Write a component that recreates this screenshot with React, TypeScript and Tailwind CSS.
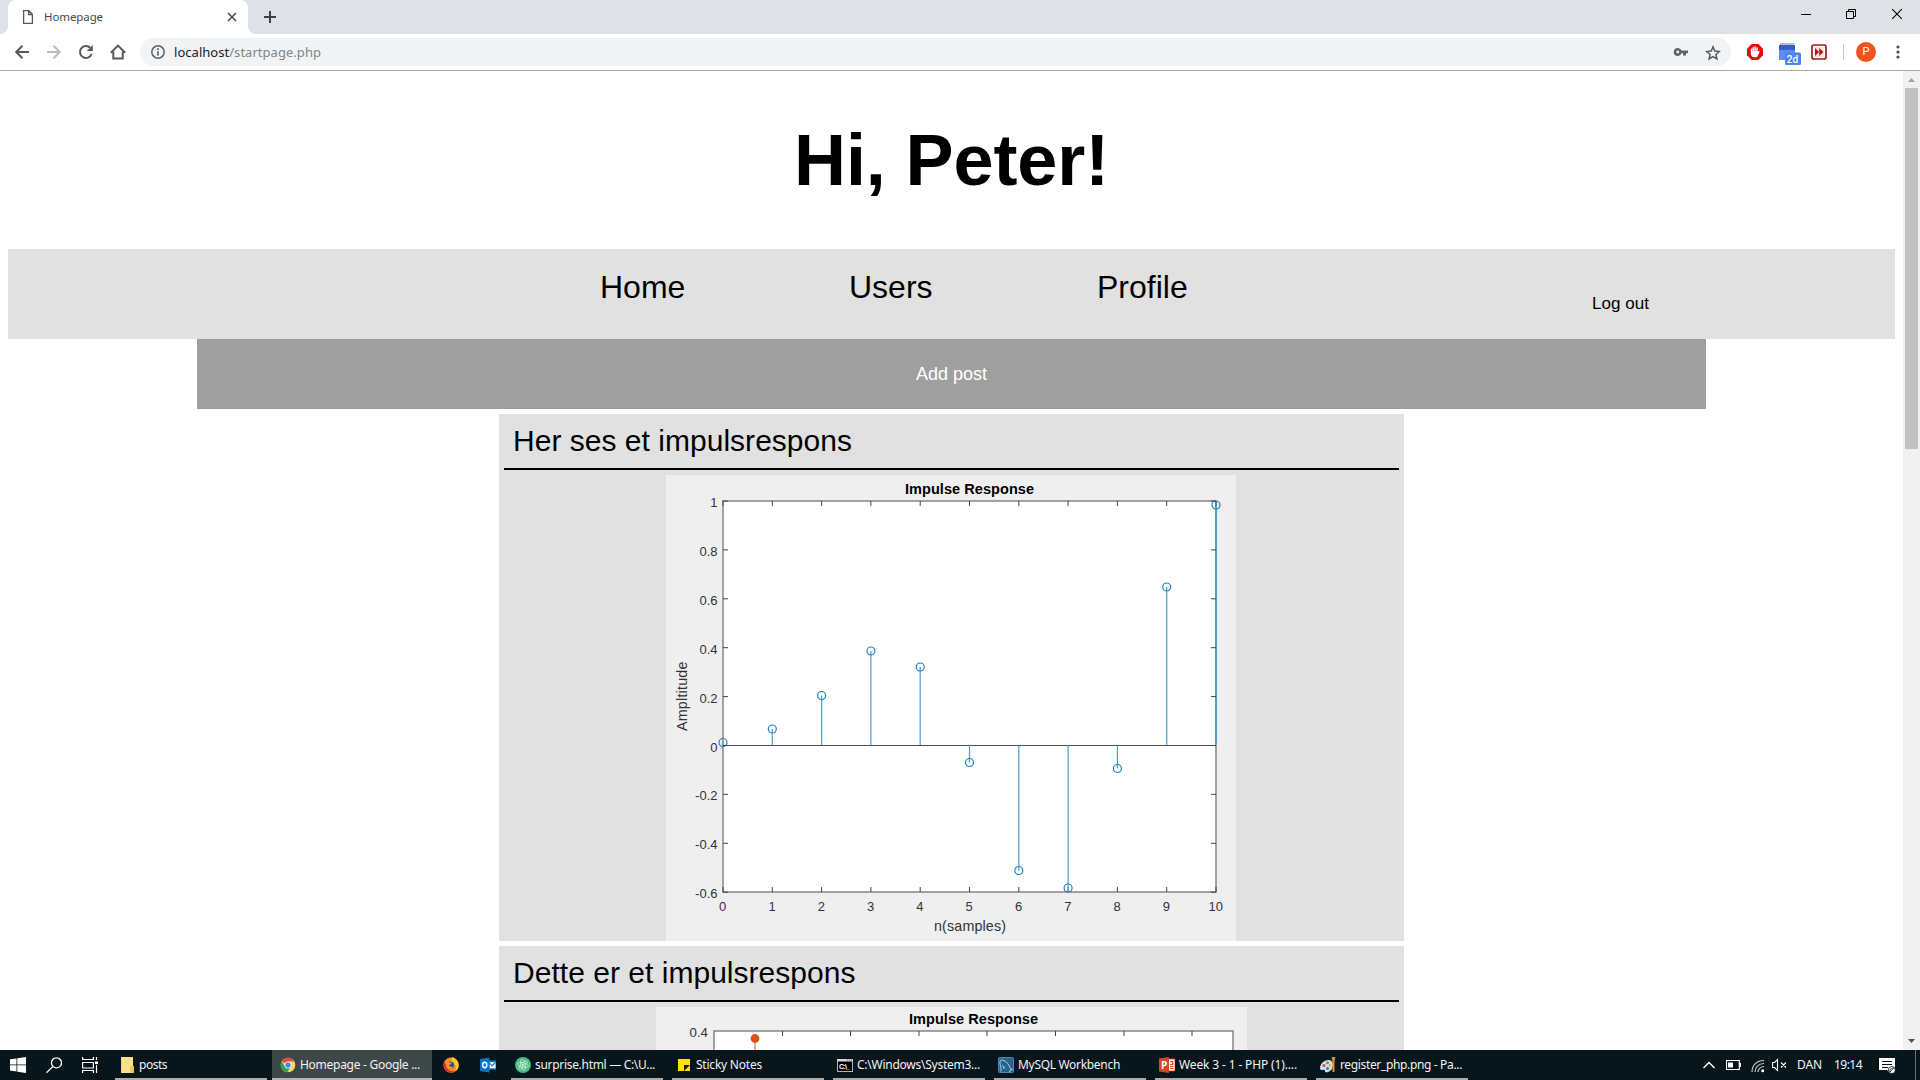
import { useLayoutEffect, useRef } from 'react';
import type { ReactNode } from 'react';

/** Inline label whose tracking is adjusted so that it fills the given width. */
function Fit({ w, children, className = '' }: { w: number; children: ReactNode; className?: string }) {
  const ref = useRef<HTMLSpanElement>(null);
  useLayoutEffect(() => {
    const el = ref.current;
    if (!el) return;
    el.style.letterSpacing = '0px';
    const n = (el.textContent || '').length;
    el.style.letterSpacing = `${(w - el.getBoundingClientRect().width) / n}px`;
  }, [w]);
  return <span ref={ref} className={`inline-block whitespace-pre ${className}`}>{children}</span>;
}

function TabStrip() {
  return (
    <div className="flex h-[34px] bg-[#dee1e6]">
      <div className="w-2 bg-white"><div className="h-full rounded-br-lg bg-[#dee1e6]" /></div>
      <div className="flex w-[240px] items-center rounded-t-lg bg-white pl-[14px] pr-[10px] text-[11.5px] text-[#45494d]">
        <svg width="12" height="16" viewBox="0 0 12 16" fill="none" stroke="#55595e" strokeWidth="1.3">
          <path d="M1.6 1.7h5.2l3.6 3.6v9H1.6zM6.6 1.7v3.8h3.8" />
        </svg>
        <Fit w={59} className="ml-[10px]">Homepage</Fit>
        <svg className="ml-auto" width="12" height="12" viewBox="0 0 12 12" stroke="#4b4f54" strokeWidth="1.7"><path d="M2 2l8 8M10 2l-8 8" /></svg>
      </div>
      <div className="w-2 bg-white"><div className="h-full rounded-bl-lg bg-[#dee1e6]" /></div>
      <div className="flex w-7 items-center justify-center">
        <svg width="14" height="14" viewBox="0 0 14 14" stroke="#3c4043" strokeWidth="2"><path d="M7 1v12M1 7h12" /></svg>
      </div>
      <div className="ml-auto flex pr-[5px] pt-[6px]">
        <svg width="46" height="16" viewBox="0 0 46 16" stroke="#000" fill="none"><path d="M21 8.5h10" /></svg>
        <svg width="46" height="16" viewBox="0 0 46 16" stroke="#000" fill="none"><path d="M20.500 5.500h7v7h-7zM22.500 5.500v-2h7v7h-2" /></svg>
        <svg width="43" height="16" viewBox="0 0 43 16" stroke="#000" fill="none" strokeWidth="1.1"><path d="M20.200 3.200l9.600 9.600M29.800 3.200l-9.600 9.600" /></svg>
      </div>
    </div>
  );
}

function Toolbar() {
  return (
    <div className="flex h-[37px] items-center border-b border-[#a9a9a9] bg-white">
      <div className="flex w-[140px] items-center gap-4 pl-[14px]">
        <svg width="16" height="16" viewBox="0 0 16 16" fill="none" stroke="#55595e" strokeWidth="2"><path d="M15 8H2.500M8.500 1.700L2.200 8l6.300 6.300" /></svg>
        <svg width="16" height="16" viewBox="0 0 16 16" fill="none" stroke="#b9bbbe" strokeWidth="2"><path d="M1 8h12.500M7.500 1.700L13.800 8l-6.300 6.300" /></svg>
        <svg width="16" height="16" viewBox="0 0 16 16" fill="none" stroke="#55595e" strokeWidth="2"><path d="M13.600 10A6 6 0 1 1 12.300 3.800" /><path d="M14.800 1v6h-6z" fill="#55595e" stroke="none" /></svg>
        <svg width="16" height="16" viewBox="0 0 16 16" fill="none" stroke="#55595e" strokeWidth="2"><path d="M.800 8.800L8 1.600l7.200 7.200M3.300 7.500V14.500h9.400V7.500" /></svg>
      </div>
      <div className="flex h-7 w-[1591px] items-center rounded-full bg-[#f1f3f4] pl-[11px] pr-[10px]">
        <svg width="14" height="14" viewBox="0 0 14 14" fill="none" stroke="#5f6368" strokeWidth="1.500"><circle cx="7" cy="7" r="6.200" /><path d="M7 6.200v4.300M7 3.300v1.700" strokeWidth="1.700" /></svg>
        <Fit w={147} className="ml-[9px] mt-px text-[13px] text-[#80868b]"><span className="text-[#202124]">localhost</span>/startpage.php</Fit>
        <svg className="ml-auto" width="16" height="10" viewBox="0 0 16 10" fill="#5f6368"><path fillRule="evenodd" d="M4.800 1a4 4 0 1 0 3.700 5.300H10V8.500h3V6.300h2V3.600H8.500A4 4 0 0 0 4.800 1zm0 2.600a1.400 1.400 0 1 1 0 2.800 1.400 1.400 0 0 1 0-2.800z" /></svg>
        <svg className="ml-[16px] mt-px" width="16" height="16" viewBox="0 0 16 16" fill="none" stroke="#55595e" strokeWidth="1.500"><path d="M8 1.900l1.800 4.200 4.500.4-3.400 3 1 4.500L8 11.600 4.100 14l1-4.500-3.400-3 4.500-.4z" /></svg>
      </div>
      <div className="ml-auto flex h-full items-center">
        <svg width="16" height="16" viewBox="0 0 16 16"><path d="M4.700 0h6.600L16 4.700v6.600L11.300 16H4.700L0 11.300V4.700z" fill="#e40d0d" /><path d="M4.500 8V5.200M6.200 8V3.700M8.100 8V3M10 8V4" stroke="#fff" strokeWidth="1.400" strokeLinecap="round" /><path d="M3.900 7h6.800v1l1-.9c.6-.4 1.200 0 .8.600L10.800 12c-.5.900-1.300 1.300-2.500 1.300H7.500c-2.300 0-3.600-1.500-3.600-3.500z" fill="#fff" /></svg>
        <svg className="ml-[16px] mt-1" width="22" height="24" viewBox="0 0 22 24">
          <path d="M0 6h16v12H0z" fill="#5b8def" /><path d="M0 3h16v5H0z" fill="#3560c8" /><path d="M1 1h14v2H1z" fill="#bdbdbd" />
          <rect x="6" y="10.500" width="16" height="12.500" rx="1.500" fill="#4a86e8" />
          <text x="13.500" y="20.600" textAnchor="middle" fill="#fff" fontSize="10" fontWeight="500" fontFamily="Roboto, sans-serif">2d</text>
        </svg>
        <svg className="ml-[10px]" width="16" height="16" viewBox="0 0 16 16"><rect x="1" y="1" width="14" height="14" rx="2" fill="#fff" stroke="#a71b18" strokeWidth="1.700" /><rect x="3" y="3" width="10" height="10" fill="#e5b5b0" opacity=".35" /><path d="M4 4l4 4-4 4zM8.200 4l4.200 4-4.200 4z" fill="#ad1613" /></svg>
        <div className="ml-[16px] h-4 w-px bg-[#c7c9cc]" />
        <div className="ml-[12px] flex size-5 items-center justify-center rounded-full bg-[#f4511e] font-[Roboto] text-[11px] text-white">P</div>
        <svg className="ml-[20px] mr-[20px]" width="4" height="14" viewBox="0 0 4 14" fill="#4c5055"><circle cx="2" cy="2" r="1.600" /><circle cx="2" cy="7" r="1.600" /><circle cx="2" cy="12" r="1.600" /></svg>
      </div>
    </div>
  );
}

const stems = [742.5, 729, 695.5, 651, 667, 762.500, 870.500, 888, 768.500, 587, 505];
const yLabels = ['1', '0.8', '0.6', '0.4', '0.2', '0', '-0.2', '-0.4', '-0.6'];

function SampleChart() {
  return (
    <svg className="ml-[162px] block bg-[#efefef]" width="570" height="466" viewBox="666 475 570 466" fontFamily="Liberation Sans, sans-serif">
      <rect x="723" y="501" width="493" height="391" fill="#fff" stroke="#858585" strokeWidth="1.500" />
      <path d="M723 745.500H1216" stroke="#4d4d4d" />
      {stems.map((y, i) => {
        const x = 723 + i * 49.3;
        return (
          <g key={i}>
            <path d={`M${x} 892v-5M${x} 501v5`} stroke="#444" strokeWidth="1" />
            <path d={`M${x} 745V${y}`} stroke="#4c9dd1" strokeWidth={i === 10 ? 2 : 1.2} />
            <circle cx={x} cy={y} r="4" fill="none" stroke="#1a80c6" strokeWidth="1.200" />
            <text x={x - 0.3} y="911" textAnchor="middle" fontSize="13" fill="#333">{i}</text>
          </g>
        );
      })}
      {yLabels.map((t, i) => {
        const y = 501 + i * 48.9;
        return (
          <g key={t}>
            <path d={`M723 ${y}h5M1216 ${y}h-5`} stroke="#444" />
            <text x="717.500" y={y + 6} textAnchor="end" fontSize="13" fill="#333">{t}</text>
          </g>
        );
      })}
      <text x="905" y="494" fontSize="14.500" fontWeight="bold" textLength="129" fill="#000">Impulse Response</text>
      <text x="934" y="931" fontSize="14.300" textLength="72" fill="#333">n(samples)</text>
      <text transform="translate(687 731) rotate(-90)" fontSize="14.300" textLength="69.500" fill="#333">Ampltitude</text>
    </svg>
  );
}

function NextChart() {
  return (
    <svg className="mx-auto block bg-[#efefef]" width="591" height="480" viewBox="656 1007 591 480" fontFamily="Liberation Sans, sans-serif">
      <rect x="714" y="1031" width="519" height="410" fill="#fff" stroke="#858585" strokeWidth="1.500" />
      <path d="M782.500 1031v5M850.500 1031v5M919 1031v5M987 1031v5M1055.500 1031v5M1124 1031v5M1192 1031v5" stroke="#444" />
      <path d="M755 1038v60" stroke="#ec9c7c" strokeWidth="1.700" />
      <circle cx="755" cy="1038.500" r="4.400" fill="#d95319" />
      <text x="708" y="1037" textAnchor="end" fontSize="13.300" fill="#333">0.4</text>
      <text x="909" y="1024" fontSize="14.500" fontWeight="bold" textLength="129" fill="#000">Impulse Response</text>
    </svg>
  );
}

function Post({ title, w, children }: { title: string; w: number; children: ReactNode }) {
  return (
    <article className="mx-auto mt-[5px] w-[905px] bg-[#e1e1e1] px-[5px] pt-[5px]">
      <h2 className="flex h-[51px] items-start border-b-2 border-black pl-[9px] pt-[5px] text-[30px] leading-[34px]"><Fit w={w}>{title}</Fit></h2>
      <div className="pt-[5px]">{children}</div>
    </article>
  );
}

function Page() {
  return (
    <div className="flex h-[979px] overflow-hidden bg-white">
      <main className="h-full w-[1903px] overflow-hidden px-2 font-['Liberation_Sans',Arial,sans-serif] text-black">
        <h1 className="h-[178px] pt-[49px] text-center text-[72px] font-bold leading-[80px]"><Fit w={315}>Hi, Peter!</Fit></h1>
        <nav className="flex h-[90px] bg-[#e1e1e1]">
          <a className="ml-[592px] mt-[20px] w-[249px] text-[32px] leading-9">Home</a>
          <a className="mt-[20px] w-[248px] text-[32px] leading-9">Users</a>
          <a className="mt-[20px] w-[495px] text-[32px] leading-9">Profile</a>
          <a className="mt-[45px] text-[17px] leading-5"><Fit w={57}>Log out</Fit></a>
        </nav>
        <div className="ml-[189px] flex h-[70px] w-[1509px] items-center justify-center bg-[#9f9f9f] text-[18px] text-white">Add post</div>
        <Post title="Her ses et impulsrespons" w={339}><SampleChart /></Post>
        <Post title="Dette er et impulsrespons" w={342.5}><NextChart /></Post>
      </main>
      <div className="flex w-[17px] flex-col items-center bg-[#f1f1f1]">
        <svg width="17" height="17" viewBox="0 0 17 17"><path d="M5 11l3.500-4 3.500 4z" fill="#a3a3a3" /></svg>
        <div className="h-[361px] w-[13px] bg-[#c1c1c1]" />
        <svg className="mt-auto" width="17" height="17" viewBox="0 0 17 17"><path d="M5 6l3.500 4L12 6z" fill="#505050" /></svg>
      </div>
    </div>
  );
}

function ChromeIcon() {
  return (
    <svg width="16" height="16" viewBox="0 0 16 16">
      <circle cx="8" cy="8" r="7.300" fill="#fdd663" />
      <path d="M8 8L1.700 4.300A7.300 7.300 0 0 1 14.400 4.500H8z" fill="#e04a3c" />
      <path d="M1.700 4.300A7.300 7.300 0 0 0 7.200 15.300L10.800 9.500 8 8 4.600 9z" fill="#2ea152" />
      <circle cx="8" cy="8" r="3.500" fill="#fff" /><circle cx="8" cy="8" r="2.700" fill="#4285f4" />
    </svg>
  );
}

function FolderIcon() {
  return <svg width="16" height="16" viewBox="0 0 16 16"><path d="M2 0h12v16H2z" fill="#fbe08b" /><path d="M11.500 9h3.500v7h-3.500z" fill="#e9c35d" /><path d="M2 0h1v16H2z" fill="#f4d16d" /></svg>;
}

function AtomIcon() {
  return (
    <svg width="16" height="16" viewBox="0 0 16 16" fill="none">
      <circle cx="8" cy="8" r="8" fill="#48b985" />
      <g stroke="#cbeedd" strokeWidth=".800"><ellipse cx="8" cy="8" rx="5.500" ry="2.200" transform="rotate(15 8 8)" /><ellipse cx="8" cy="8" rx="5.500" ry="2.200" transform="rotate(75 8 8)" /><ellipse cx="8" cy="8" rx="5.500" ry="2.200" transform="rotate(135 8 8)" /></g>
      <circle cx="8" cy="8" r="1" fill="#e9fff5" />
    </svg>
  );
}

function NoteIcon() {
  return <svg width="16" height="16" viewBox="0 0 16 16"><path d="M2 2h12v12H2z" fill="#ffe100" /><path d="M8 8h6l-6 6z" fill="#1d1d14" /></svg>;
}

function ConsoleIcon() {
  return (
    <svg width="16" height="16" viewBox="0 0 16 16"><rect x=".500" y="2.500" width="15" height="12" fill="#000" stroke="#b0b4ba" /><path d="M0 2h16v2.500H0z" fill="#cfd3da" /><path d="M10 3h1M12 3h1M14 3h1" stroke="#4a69a8" /><text x="2" y="11.800" fill="#fff" fontSize="7" fontWeight="bold" fontFamily="Liberation Sans, sans-serif" textLength="11">C:\_</text></svg>
  );
}

function DolphinIcon() {
  return <svg width="16" height="16" viewBox="0 0 16 16" fill="none"><rect x=".500" y=".500" width="15" height="15" rx="1" fill="#25648f" stroke="#4c8ab0" /><path d="M2.500 14.500C4 12 2.200 9 2 6.500 1.800 3.500 3 2.500 5 3.200c4 1.300 6 4.800 7 7.500l2.500 2-2.200.2-.8 2.100M4.500 8l1.500 3.500 1-1.500" stroke="#bed7e5" strokeWidth=".900" /></svg>;
}

function SlidesIcon() {
  return (
    <svg width="16" height="16" viewBox="0 0 16 16"><path d="M8 2h8v12H8z" fill="#fff" stroke="#d24726" strokeWidth=".800" /><path d="M11 4.500h2.700v3H11M11 9.500h3.500M11 11.500h3.500" fill="none" stroke="#d24726" strokeWidth="1.200" /><path d="M0 1.500L10 0v16L0 14.500z" fill="#d24726" /><text x="1.900" y="11.700" fill="#fff" fontSize="10" fontWeight="bold" fontFamily="Open Sans, sans-serif">P</text></svg>
  );
}

function PaletteIcon() {
  return <svg width="16" height="16" viewBox="0 0 16 16"><path d="M0 11.500C0 7 4 3 8.500 3c3 0 4.500 2 4.500 5 0 4-3 7.300-7 7.300-1.500 0-.500-2.300-2-2.500-1.500-.2-3 1.500-4-1.300z" fill="#c9e2f2" /><circle cx="4" cy="8.500" r="1.500" fill="#de4a36" /><circle cx="7.500" cy="5.700" r="1.500" fill="#4ca64a" /><circle cx="10" cy="8.500" r="1.400" fill="#f3b928" /><circle cx="7.500" cy="11.500" r="1.500" fill="#3672c5" /><path d="M12.500 5h2v10h-2z" fill="#e39336" /><path d="M11.500 0h4l-1 5h-2z" fill="#c98d45" /></svg>;
}

function Task({ icon, label, w }: { icon: ReactNode; label: string; w: number }) {
  return <div className="mr-[9px] flex h-full w-[152px] items-center border-b-2 border-[#a9acac] pl-1 pt-[2px]">{icon}<Fit w={w} className="ml-1">{label}</Fit></div>;
}

function Taskbar() {
  return (
    <footer className="flex h-[30px] items-center bg-[#08151a] font-['Noto_Sans','Open_Sans',sans-serif] text-[12px] text-[#f1f3f3]">
      <div className="flex w-[115px] items-center pl-[10px]">
        <svg width="16" height="16" viewBox="0 0 16 16" fill="#fff"><path d="M0 2.300l6.500-.9v6.100H0zM7.300 1.300L16 0v7.500H7.300zM0 8.300h6.500v6.200L0 13.600zM7.300 8.300H16V16l-8.700-1.300z" /></svg>
        <svg className="ml-[20px]" width="16" height="16" viewBox="0 0 16 16" fill="none" stroke="#fff" strokeWidth="1.300"><circle cx="10.500" cy="5.800" r="5" /><path d="M7 9.400L.500 15.700" /></svg>
        <svg className="ml-[20px]" width="16" height="16" viewBox="0 0 16 16" fill="none" stroke="#fff" strokeWidth="1.200"><path d="M.600 0v2.500h10.800V0M.600 5.500h10.800v5.500H.600zM.600 16v-2.500h10.800V16M14.500 0v3M14.500 8v8" /><path d="M13 4.500h3v2.500h-3z" fill="#fff" stroke="none" /></svg>
      </div>
      <div className="mr-[5px] flex h-full w-[152px] items-center border-b-2 border-[#a9acac] pl-1 pt-[2px]"><FolderIcon /><Fit w={28} className="ml-1">posts</Fit></div>
      <div className="flex h-full w-[160px] items-center border-b-2 border-[#b3b5b5] bg-[#3d4748] pl-2 pt-[2px]"><ChromeIcon /><Fit w={120} className="ml-1">Homepage - Google ...</Fit></div>
      <div className="flex w-[79px] items-center pl-[11px]">
        <svg width="16" height="16" viewBox="0 0 16 16"><circle cx="8" cy="8.200" r="7.600" fill="#ff8a1c" /><path d="M1 3C.200 6 0 9.500 2.500 12.800 5 16 10 16.500 13 14c-4 1-8-.500-9.500-4z" fill="#e3254b" /><path d="M9 0c4 1.500 7 4 6.700 9-.3 2.500-1.500 4-3 5C14 10 12 6 8 4.500z" fill="#ffc928" /><circle cx="7.500" cy="8" r="3.600" fill="#304ca5" /><path d="M4 4l3 1.500 2 1-3 1.500c0 2 2 2.500 4 1.500-1 3-6 3-7 0z" fill="#ff9720" /></svg>
        <svg className="ml-[21px]" width="16" height="16" viewBox="0 0 17 16"><path d="M8 3h9v10H8z" fill="#0873c7" /><path d="M10 5h6.500v6.500H10z" fill="#fff" /><path d="M10 6l3 2.800L16.500 5" fill="none" stroke="#0873c7" strokeWidth="1.200" /><path d="M0 1.500L10 0v16L0 14.500z" fill="#0873c7" /><ellipse cx="5" cy="8" rx="2.200" ry="2.900" fill="none" stroke="#fff" strokeWidth="1.600" /></svg>
      </div>
      <Task icon={<AtomIcon />} label="surprise.html — C:\U..." w={120} />
      <Task icon={<NoteIcon />} label="Sticky Notes" w={66} />
      <Task icon={<ConsoleIcon />} label="C:\Windows\System3..." w={123} />
      <Task icon={<DolphinIcon />} label="MySQL Workbench" w={102} />
      <Task icon={<SlidesIcon />} label="Week 3 - 1 - PHP (1)...." w={118} />
      <Task icon={<PaletteIcon />} label="register_php.png - Pa..." w={122} />
      <div className="ml-auto flex h-full items-center">
        <svg width="12" height="8" viewBox="0 0 12 8" fill="none" stroke="#fff" strokeWidth="1.400"><path d="M.500 7L6 1.500 11.500 7" /></svg>
        <svg className="ml-[11px]" width="15" height="10" viewBox="0 0 15 10" fill="none" stroke="#fff"><path d="M.500.500h12.800v9H.500z" strokeWidth="1.200" /><path d="M2 2.500h5v5H2zM13.500 3h1.500v4h-1.500z" fill="#fff" stroke="none" /></svg>
        <svg className="ml-[10px] mt-px" width="14" height="14" viewBox="0 0 14 14" fill="none" stroke="#c8cccc" strokeWidth="1.200"><path d="M1 13C1 6 6 1.500 13 1.500M4 13c0-5 4-8.500 9-8.500M7 13c0-3 3-5.500 6-5.500" /><circle cx="11.700" cy="11.800" r="1.500" fill="#fff" stroke="none" /></svg>
        <svg className="ml-[7px]" width="15" height="14" viewBox="0 0 15 14" fill="none" stroke="#fff" strokeWidth="1.100"><path d="M.600 4.500h2L5.500 1.500v11L2.600 9.500h-2zM9 4.500l5 5M14 4.500l-5 5" /></svg>
        <Fit w={25} className="ml-[10px]">DAN</Fit>
        <Fit w={28} className="ml-[12px]">19:14</Fit>
        <svg className="ml-[17px]" width="17" height="17" viewBox="0 0 17 17"><path d="M0 1h16v12h-5v3l-3-3H0z" fill="#fff" /><path d="M3 4.500h10M3 7.500h10M3 10.500h6" stroke="#08151a" /><circle cx="12.800" cy="13" r="3.500" fill="#fff" stroke="#08151a" strokeWidth=".800" /><path d="M11 15c-1-3 2-4 3.500-4M11 15l3.500-4" stroke="#08151a" strokeWidth=".800" fill="none" /></svg>
        <div className="ml-[19px] mr-1 h-full w-px bg-[#627074]" />
      </div>
    </footer>
  );
}

export default function App() {
  return (
    <div className="h-[1080px] w-[1920px] overflow-hidden bg-white font-['Noto_Sans','Open_Sans',sans-serif]">
      <TabStrip />
      <Toolbar />
      <Page />
      <Taskbar />
    </div>
  );
}
